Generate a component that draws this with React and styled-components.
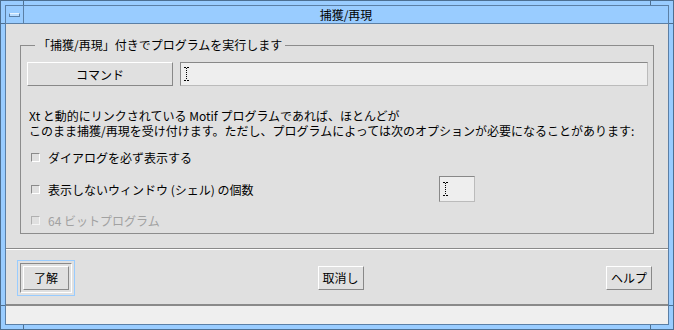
import styled, { createGlobalStyle } from "styled-components";

const GlobalStyle = createGlobalStyle`
  html, body {
    margin: 0;
    padding: 0;
    background: #ffffff;
  }
  body {
    font-family: "Noto Sans CJK JP", "Noto Sans", sans-serif;
    font-size: 12px;
    color: #000;
  }
`;

const FRAME_DARK = "#4d6f91";

const Window = styled.div`
  position: relative;
  width: 674px;
  height: 330px;
  box-sizing: border-box;
  background: #99ccff;
  border: 1px solid ${FRAME_DARK};
  padding: 4px;
`;

// little resize-handle marks on the frame
const Tick = styled.span`
  position: absolute;
  background: ${FRAME_DARK};
  width: ${(p) => (p.$vertical ? "1px" : "5px")};
  height: ${(p) => (p.$vertical ? "5px" : "1px")};
`;

const Inner = styled.div`
  height: 100%;
  box-sizing: border-box;
  display: flex;
  flex-direction: column;
  border: 1px solid #5b7fa5;
`;

const TitleBar = styled.div`
  height: 17px;
  display: flex;
  border-bottom: 1px solid #5b7fa5;
  background: #99ccff;
`;

const MenuBox = styled.div`
  width: 17px;
  border-right: 1px solid #5b7fa5;
  display: flex;
  align-items: center;
  justify-content: center;
`;

const MenuBar = styled.span`
  width: 9px;
  height: 2px;
  background: #b8dcff;
  border: 1px solid #5b7fa5;
  border-top-color: #e8f4ff;
  margin-top: 1px;
`;

const Title = styled.div`
  flex: 1;
  text-align: center;
  line-height: 17px;
  font-size: 12px;
`;

const Body = styled.div`
  height: 282px;
  box-sizing: border-box;
  background: #e0e0e0;
  border-bottom: 2px solid #8a8a8a;
  display: flex;
  flex-direction: column;
`;

const Top = styled.div`
  padding: 13px 14px 0 14px;
`;

const Group = styled.fieldset`
  margin: 0;
  border: 1px solid #8c8c8c;
  padding: 0 5px 1px 6px;
`;

const Legend = styled.legend`
  margin-left: 8px;
  padding: 0 3px;
  line-height: 16px;
  font-size: 12px;
`;

const CommandRow = styled.div`
  margin-top: 9px;
  display: flex;
  gap: 7px;
  height: 24px;
`;

const Button = styled.button`
  box-sizing: border-box;
  width: ${(p) => p.$w || 46}px;
  height: 24px;
  padding: 0;
  margin: 0;
  font-family: inherit;
  font-size: 12px;
  color: #000;
  background: #e0e0e0;
  border: 1px solid;
  border-color: #ffffff #888888 #888888 #ffffff;
`;

const Field = styled.div`
  box-sizing: border-box;
  flex: ${(p) => (p.$w ? "none" : "1")};
  width: ${(p) => (p.$w ? `${p.$w}px` : "auto")};
  height: ${(p) => p.$h || 24}px;
  background: #eeeeee;
  border: 1px solid;
  border-color: #888888 #bbbbbb #bbbbbb #888888;
  display: flex;
  align-items: center;
  padding-left: 3px;
`;

const Paragraph = styled.p`
  margin: 22px 0 0 2px;
  line-height: 15px;
  font-size: 12px;
  white-space: nowrap;
`;

const Options = styled.div`
  margin-top: 6px;
  display: flex;
  flex-direction: column;
  gap: 6px;
`;

const OptionRow = styled.div`
  height: ${(p) => p.$h || 26}px;
  display: flex;
  align-items: center;
  color: ${(p) => (p.$disabled ? "#a2a2a2" : "#000")};
`;

const Check = styled.span`
  box-sizing: border-box;
  width: 9px;
  height: 9px;
  margin-left: 4px;
  margin-right: 8px;
  border: 1px solid;
  border-color: ${(p) =>
    p.$disabled ? "#b0b0b0 #f4f4f4 #f4f4f4 #b0b0b0" : "#8a8a8a #ffffff #ffffff #8a8a8a"};
`;

const Label = styled.span`
  white-space: nowrap;
  width: ${(p) => (p.$w ? `${p.$w}px` : "auto")};
  flex: none;
`;

const Separator = styled.div`
  margin-top: 14px;
  border-top: 1px solid #8a8a8a;
  border-bottom: 1px solid #ffffff;
`;

const ButtonRow = styled.div`
  flex: 1;
  display: flex;
  align-items: center;
  justify-content: space-between;
  padding: 1px 16px 0 11px;
`;

const DefaultRing = styled.div`
  border: 1px solid #99ccff;
  padding: 2px;
`;

const DefaultFrame = styled.div`
  border: 1px solid;
  border-color: #888888 #ffffff #ffffff #888888;
  padding: 2px;
  display: flex;
`;

const IBeam = () => (
  <svg width="5" height="14" viewBox="0 0 5 14">
    <path d="M0 0.5h2M3 0.5h2M0 13.5h2M3 13.5h2" stroke="#000" strokeWidth="1" />
    <path d="M2.5 1v12" stroke="#000" strokeWidth="1" strokeDasharray="1 1" />
  </svg>
);

const ticks = [
  { top: 0, left: 23, v: true },
  { top: 0, left: 650, v: true },
  { top: 325, left: 23, v: true },
  { top: 325, left: 650, v: true },
  { top: 23, left: 0 },
  { top: 305, left: 0 },
  { top: 23, left: 669 },
  { top: 305, left: 669 },
];

export default function App() {
  return (
    <>
      <GlobalStyle />
      <Window>
        {ticks.map((t, i) => (
          <Tick
            key={i}
            $vertical={t.v}
            style={{ top: t.top - 1, left: t.left - 1 }}
          />
        ))}
        <Inner>
          <TitleBar>
            <MenuBox>
              <MenuBar />
            </MenuBox>
            <Title>捕獲/再現</Title>
          </TitleBar>
          <Body>
            <Top>
              <Group>
                <Legend>「捕獲/再現」付きでプログラムを実行します</Legend>
                <CommandRow>
                  <Button $w={146}>コマンド</Button>
                  <Field>
                    <IBeam />
                  </Field>
                </CommandRow>
                <Paragraph>
                  Xt と動的にリンクされている Motif プログラムであれば、ほとんどが
                  <br />
                  このまま捕獲/再現を受け付けます。ただし、プログラムによっては次のオプションが必要になることがあります:
                </Paragraph>
                <Options>
                  <OptionRow>
                    <Check />
                    <Label>ダイアログを必ず表示する</Label>
                  </OptionRow>
                  <OptionRow>
                    <Check />
                    <Label $w={391}>表示しないウィンドウ (シェル) の個数</Label>
                    <Field $w={36} $h={26}>
                      <IBeam />
                    </Field>
                  </OptionRow>
                  <OptionRow $h={24} $disabled>
                    <Check $disabled />
                    <Label>64 ビットプログラム</Label>
                  </OptionRow>
                </Options>
              </Group>
            </Top>
            <Separator />
            <ButtonRow>
              <DefaultRing>
                <DefaultFrame>
                  <Button>了解</Button>
                </DefaultFrame>
              </DefaultRing>
              <Button>取消し</Button>
              <Button>ヘルプ</Button>
            </ButtonRow>
          </Body>
          <Status />
        </Inner>
      </Window>
    </>
  );
}

const Status = styled.div`
  flex: 1;
  background: #efefef;
`;
